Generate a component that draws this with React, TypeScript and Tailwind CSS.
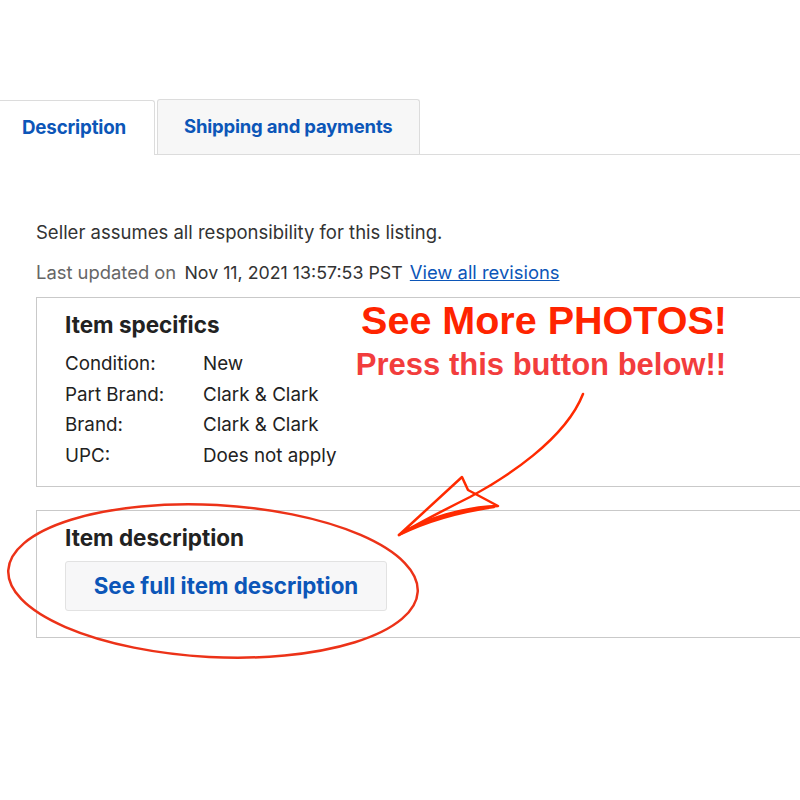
import React from 'react';

const specifics = [
  { label: 'Condition:', value: 'New' },
  { label: 'Part Brand:', value: 'Clark & Clark' },
  { label: 'Brand:', value: 'Clark & Clark' },
  { label: 'UPC:', value: 'Does not apply' },
];

export default function App() {
  return (
    <div
      className="relative w-[800px] h-[800px] overflow-hidden bg-white pt-[100px]"
      style={{ fontFamily: 'Inter, "Open Sans", sans-serif' }}
    >
      {/* Tabs */}
      <div className="flex items-end border-b border-[#dcdcdc] h-[55px]">
        <div className="h-[55px] w-[155px] -mb-px bg-white border-t border-r border-[#dcdcdc] rounded-tr-[3px] flex items-center pl-[22px]">
          <span className="text-[18.8px] font-bold text-[#0c56b8] tracking-[-0.2px]">Description</span>
        </div>
        <div className="h-[55px] w-[263px] ml-[2px] bg-[#f7f7f7] border-t border-x border-[#dcdcdc] rounded-t-[3px] flex items-center pl-[26px]">
          <span className="text-[18.5px] font-bold text-[#0c56b8] tracking-[-0.2px]">Shipping and payments</span>
        </div>
      </div>

      <div className="pl-[36px] -mr-[20px]">
        <p className="mt-[65px] text-[18.5px] leading-[24px] text-[#333]">
          Seller assumes all responsibility for this listing.
        </p>
        <p className="mt-[16px] text-[18.4px] leading-[24px] text-[#666]">
          Last updated on{' '}
          <span className="text-[17.8px] text-[#333] ml-[3px]">Nov 11, 2021 13:57:53 PST</span>{' '}
          <span className="ml-[2px] text-[#0c56b8] underline">View all revisions</span>
        </p>

        {/* Item specifics */}
        <div className="mt-[12px] border border-[#c9c9c9] pl-[28px] pt-[13px] pb-[14px]">
          <h3 className="text-[22.5px] leading-[28px] font-bold text-[#222]">Item specifics</h3>
          <div className="mt-[10px]">
            {specifics.map((s) => (
              <div key={s.label} className="flex text-[18.8px] leading-[30.7px] text-[#222]">
                <span className="w-[138px]">{s.label}</span>
                <span>{s.value}</span>
              </div>
            ))}
          </div>
        </div>

        {/* Item description */}
        <div className="mt-[23px] border border-[#c9c9c9] pl-[28px] pt-[13px] pb-[26px]">
          <h3 className="text-[22.5px] leading-[28px] font-bold text-[#222]">Item description</h3>
          <button className="mt-[9px] h-[50px] w-[322px] bg-[#f7f7f8] border border-[#e2e2e2] rounded-[3px] text-[22.4px] font-bold text-[#0c56b8]">
            See full item description
          </button>
        </div>
      </div>

      {/* Annotation */}
      <div
        className="absolute left-[324px] top-[297px] w-[440px] flex flex-col items-center"
        style={{ fontFamily: '"Liberation Sans", Arial, sans-serif' }}
      >
        <span className="text-[39.5px] leading-[46px] font-bold text-[#ff2400]">See More PHOTOS!</span>
        <span className="mt-[4px] -ml-[6px] text-[31px] leading-[36px] font-bold text-[#f23d3d]">
          Press this button below!!
        </span>
      </div>

      <svg className="absolute inset-0 pointer-events-none" width="800" height="800" viewBox="0 0 800 800">
        <ellipse
          cx="213"
          cy="581"
          rx="205"
          ry="76"
          transform="rotate(3 213 581)"
          fill="none"
          stroke="#ec3218"
          strokeWidth="2.5"
        />
        <path
          d="M583 394 C 565 440, 505 478, 470 497 C 440 512, 415 525, 399 535"
          fill="none"
          stroke="#ff2a00"
          strokeWidth="2.5"
          strokeLinecap="round"
        />
        <path
          d="M399 535 L462 477 L468 490 L498 506 C 465 507, 425 518, 399 535 C 425 522, 460 512, 494 507"
          fill="none"
          stroke="#ff2a00"
          strokeWidth="2.5"
          strokeLinejoin="round"
          strokeLinecap="round"
        />
      </svg>
    </div>
  );
}
